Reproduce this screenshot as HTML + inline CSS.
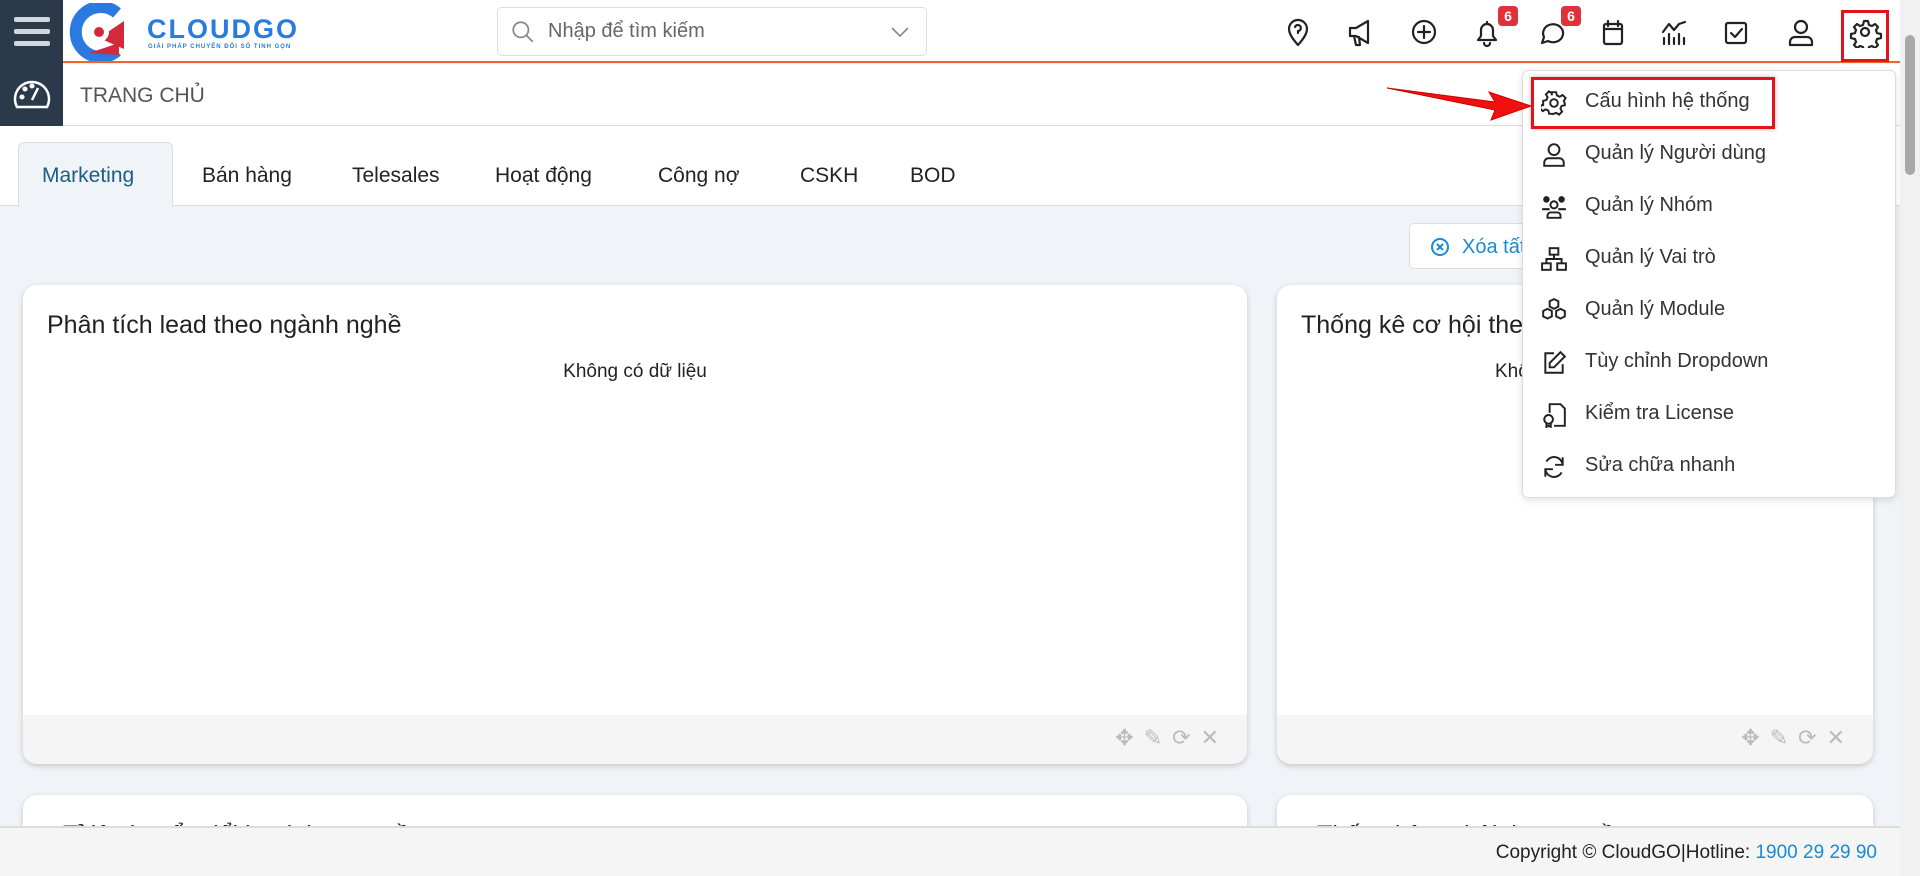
<!DOCTYPE html>
<html><head><meta charset="utf-8"><style>
*{box-sizing:border-box;margin:0;padding:0}
html{width:1920px;height:876px;overflow:hidden}
body{width:1920px;height:876px;overflow:hidden;font-family:"Liberation Sans",sans-serif;background:#f0f3f7;position:relative;color:#222}
.abs{position:absolute}
.side{left:0;top:0;width:63px;height:126px;background:#2b3a4a}
.top{left:63px;top:0;width:1837px;height:63px;background:#fff;border-bottom:2px solid #f0642a}
.row2{left:63px;top:64px;width:1837px;height:62px;background:#fff;border-bottom:1px solid #ddd}
.tabs{left:0;top:126px;width:1900px;height:80px;background:#fff;border-bottom:1px solid #ddd}
.tab{position:absolute;top:38px;font-size:21px;color:#222}
.card{background:#fff;border-radius:14px;box-shadow:0 2px 6px rgba(0,0,0,.18);overflow:hidden}
.cf{position:absolute;left:0;right:0;bottom:0;height:49px;background:#f5f5f5}
.badge{position:absolute;top:6px;background:#e0303c;color:#fff;font-size:14px;font-weight:bold;width:20px;height:20px;border-radius:4px;text-align:center;line-height:20px}
.dd{left:1522px;top:70px;width:374px;height:428px;background:#fff;border:1px solid #ddd;border-radius:6px;box-shadow:0 2px 8px rgba(0,0,0,.12)}
.it{position:absolute;left:62px;font-size:20px;color:#333;white-space:nowrap}
.ii{position:absolute;left:18px;width:26px;height:26px}
</style></head><body>
<div class="abs side">
 <div class="abs" style="left:14px;top:17px;width:36px;height:5px;background:#cfd6dd;border-radius:2px"></div>
 <div class="abs" style="left:14px;top:29px;width:36px;height:5px;background:#cfd6dd;border-radius:2px"></div>
 <div class="abs" style="left:14px;top:41px;width:36px;height:5px;background:#cfd6dd;border-radius:2px"></div>
 <svg class="abs" style="left:12px;top:78px" width="40" height="32" viewBox="0 0 40 32" fill="none" stroke="#fff" stroke-width="2.5"><path d="M5 29 A17 17 0 1 1 35 29 Z"/><path d="M20 22 L26 10"/><circle cx="10" cy="19" r="1.3" fill="#fff"/><circle cx="13" cy="11" r="1.3" fill="#fff"/><circle cx="20" cy="8" r="1.3" fill="#fff"/></svg>
</div>
<div class="abs top">
 <svg class="abs" style="left:6px;top:3px" width="62" height="58" viewBox="0 0 62 58"><path d="M48 10 A25 25 0 1 0 48 48" fill="none" stroke="#2a7ae2" stroke-width="12"/><path d="M30 35 L55 18 L55 46 Z" fill="#d32a3a"/><circle cx="30" cy="29" r="10" fill="#fff"/><circle cx="30" cy="29" r="5" fill="#d32a3a"/><path d="M20 50 L50 40 L50 52 Z" fill="#d32a3a"/></svg>
 <div class="abs" style="left:84px;top:14px;font-size:27px;font-weight:bold;color:#2a7ae2;letter-spacing:2px">CLOUDGO</div>
 <div class="abs" style="left:85px;top:44px;font-size:6px;font-weight:bold;color:#2a7ae2;letter-spacing:1px">GIẢI PHÁP CHUYỂN ĐỔI SỐ TINH GỌN</div>
 <div class="abs" style="left:434px;top:7px;width:430px;height:49px;border:1px solid #ddd;border-radius:5px">
  <svg class="abs" style="left:12px;top:11px" width="26" height="26" viewBox="0 0 24 24" fill="none" stroke="#888" stroke-width="1.6"><circle cx="10" cy="10" r="7"/><path d="M15 15l6 6"/></svg>
  <div class="abs" style="left:50px;top:12px;font-size:20px;color:#666">Nhập để tìm kiếm</div>
  <svg class="abs" style="left:392px;top:17px" width="20" height="14" viewBox="0 0 20 14" fill="none" stroke="#888" stroke-width="1.6"><path d="M2 3l8 8 8-8"/></svg>
 </div>
</div>
<svg class="abs" style="left:1284px;top:18px" width="600" height="30" viewBox="0 0 600 30" fill="none" stroke="#222" stroke-width="2.2" stroke-linecap="round" stroke-linejoin="round">
 <path d="M14 27 C6 18 5 14 5 11 A9 9 0 0 1 23 11 C23 14 22 18 14 27Z"/><path d="M11 9 A3 3 0 1 1 14 13 V15"/>
 <path d="M66 10 H72 L84 3 V25 L72 18 H66 Z M70 18 L72 27 H76 L75 19"/>
 <circle cx="140" cy="14" r="11"/><path d="M140 8v12M134 14h12"/>
 <path d="M194 22 H212 L209 18 V12 A6 6 0 0 0 197 12 V18 Z M200 25 A3 3 0 0 0 206 25 M203 4v2"/>
 <path d="M258 25 L260 19 A10 9 0 1 1 264 23 Z"/>
 <rect x="320" y="6" width="18" height="20" rx="2"/><path d="M320 11h18M324 3v5M334 3v5"/>
 <path d="M380 26v-6M385 26v-10M390 26v-6M395 26v-10M400 26v-6M379 14 L385 6 L390 12 L395 6 L401 4"/>
 <rect x="442" y="5" width="20" height="20" rx="2"/><path d="M447 15l4 4 7-8"/>
 <circle cx="517" cy="9" r="6"/><path d="M506 27 V24 A5 5 0 0 1 511 19 H523 A5 5 0 0 1 528 24 V27Z"/>
 <circle cx="581" cy="14" r="4"/><path d="M581 3 l3 0 1 4 3 1 3-2 3 3-2 3 1 3 4 1v4l-4 1-1 3 2 3-3 3-3-2-3 1-1 4h-4l-1-4-3-1-3 2-3-3 2-3-1-3-4-1v-4l4-1 1-3-2-3 3-3 3 2 3-1 1-4z"/>
</svg>
<div class="badge" style="left:1498px">6</div><div class="badge" style="left:1561px">6</div>
<div class="abs" style="left:1841px;top:10px;width:48px;height:52px;border:3px solid #e5121a"></div>
<div class="abs row2"><div class="abs" style="left:17px;top:20px;font-size:21px;color:#555">TRANG CHỦ</div></div>
<div class="abs tabs">
 <div class="abs" style="left:18px;top:16px;width:155px;height:65px;background:#f0f3f7;border:1px solid #ddd;border-bottom:none;border-radius:6px 6px 0 0"></div>
 <div class="tab" style="left:42px;color:#1a5e85">Marketing</div>
 <div class="tab" style="left:202px">Bán hàng</div>
 <div class="tab" style="left:352px">Telesales</div>
 <div class="tab" style="left:495px">Hoạt động</div>
 <div class="tab" style="left:658px">Công nợ</div>
 <div class="tab" style="left:800px">CSKH</div>
 <div class="tab" style="left:910px">BOD</div>
</div>
<div class="abs" style="left:1409px;top:223px;width:180px;height:46px;background:#fff;border:1px solid #ddd;border-radius:5px;overflow:hidden">
 <svg class="abs" style="left:20px;top:13px" width="20" height="20" viewBox="0 0 20 20" fill="none" stroke="#1a8ad4" stroke-width="2"><circle cx="10" cy="10" r="8"/><path d="M7 7l6 6M13 7l-6 6"/></svg>
 <div class="abs" style="left:52px;top:12px;font-size:20px;color:#1a8ad4;white-space:nowrap">Xóa tất cả</div>
</div>
<div class="abs card" style="left:23px;top:285px;width:1224px;height:479px">
 <div class="abs" style="left:24px;top:26px;font-size:25px">Phân tích lead theo ngành nghề</div>
 <div class="abs" style="left:0;right:0;top:76px;text-align:center;font-size:19px">Không có dữ liệu</div>
 <div class="cf"><div class="abs" style="right:18px;top:10px;font-size:22px;color:#bbb;letter-spacing:10px">✥✎⟳✕</div></div>
</div>
<div class="abs card" style="left:1277px;top:285px;width:596px;height:479px">
 <div class="abs" style="left:24px;top:26px;font-size:25px;white-space:nowrap">Thống kê cơ hội theo</div>
 <div class="abs" style="left:218px;top:76px;font-size:19px">Không có dữ liệu</div>
 <div class="cf"><div class="abs" style="right:18px;top:10px;font-size:22px;color:#bbb;letter-spacing:10px">✥✎⟳✕</div></div>
</div>
<div class="abs card" style="left:23px;top:795px;width:1224px;height:60px;border-radius:14px 14px 0 0"><div class="abs" style="left:40px;top:26px;font-size:25px">Tỉ lệ chuyển đổi lead theo nguồn</div></div>
<div class="abs card" style="left:1277px;top:795px;width:596px;height:60px;border-radius:14px 14px 0 0"><div class="abs" style="left:40px;top:26px;font-size:25px">Thống kê cơ hội theo nguồn</div></div>
<div class="abs" style="left:0;top:826px;width:1900px;height:50px;background:#f5f5f5;border-top:2px solid #ddd">
 <div class="abs" style="right:23px;top:14px;font-size:19px;color:#222">Copyright © CloudGO|Hotline: <span style="color:#1a8ad4">1900 29 29 90</span></div>
</div>
<div class="abs" style="left:1900px;top:0;width:20px;height:876px;background:#f1f1f1"><div class="abs" style="left:5px;top:35px;width:10px;height:140px;background:#a8a8a8;border-radius:5px"></div></div>
<div class="abs dd">
 <svg class="ii" style="top:19px" viewBox="0 0 24 24" fill="none" stroke="#222" stroke-width="1.8"><circle cx="12" cy="12" r="3.5"/><path d="M10 2h4l.7 3 2.5 1.2 2.7-1.6 2.8 2.8-1.6 2.7L22 12.5v0l0 1.5-3 .7-1.1 2.5 1.6 2.7-2.8 2.8-2.7-1.6-2.5 1V22h-4l-.7-3-2.5-1.1-2.7 1.6-2.8-2.8 1.6-2.7L2 14v-4l3-.7 1.1-2.5-1.6-2.7 2.8-2.8 2.7 1.6L10 5z"/></svg>
 <div class="it" style="top:19px">Cấu hình hệ thống</div>
 <svg class="ii" style="top:71px" viewBox="0 0 24 24" fill="none" stroke="#222" stroke-width="1.8"><circle cx="12" cy="7" r="5"/><path d="M3 22v-3a4 4 0 0 1 4-4h10a4 4 0 0 1 4 4v3z"/></svg>
 <div class="it" style="top:71px">Quản lý Người dùng</div>
 <svg class="ii" style="top:123px" viewBox="0 0 24 24" fill="#222"><circle cx="5" cy="5" r="3"/><circle cx="19" cy="5" r="3"/><circle cx="12" cy="10" r="3.3" fill="none" stroke="#222" stroke-width="1.8"/><path d="M1 13h7v2H1zM16 13h7v2h-7z"/><path d="M6 22v-2a3 3 0 0 1 3-3h6a3 3 0 0 1 3 3v2z" fill="none" stroke="#222" stroke-width="1.8"/></svg>
 <div class="it" style="top:123px">Quản lý Nhóm</div>
 <svg class="ii" style="top:175px" viewBox="0 0 24 24" fill="none" stroke="#222" stroke-width="1.8"><rect x="8" y="2" width="8" height="6"/><rect x="1" y="16" width="8" height="6"/><rect x="15" y="16" width="8" height="6"/><path d="M12 8v4M5 16v-4h14v4"/></svg>
 <div class="it" style="top:175px">Quản lý Vai trò</div>
 <svg class="ii" style="top:227px" viewBox="0 0 24 24" fill="none" stroke="#222" stroke-width="1.8"><path d="M8 3l4-2 4 2v5l-4 2-4-2z M2 12l4-2 4 2v5l-4 2-4-2z M14 12l4-2 4 2v5l-4 2-4-2z"/></svg>
 <div class="it" style="top:227px">Quản lý Module</div>
 <svg class="ii" style="top:279px" viewBox="0 0 24 24" fill="none" stroke="#222" stroke-width="1.8"><path d="M12 3H4v18h16v-8"/><path d="M18 2l4 4-10 10H8v-4z"/></svg>
 <div class="it" style="top:279px">Tùy chỉnh Dropdown</div>
 <svg class="ii" style="top:331px" viewBox="0 0 24 24" fill="none" stroke="#222" stroke-width="1.8"><path d="M8 10V2h10l4 4v16H12"/><circle cx="7" cy="16" r="4"/><path d="M5 19v4l2-1 2 1v-4"/></svg>
 <div class="it" style="top:331px">Kiểm tra License</div>
 <svg class="ii" style="top:383px" viewBox="0 0 24 24" fill="none" stroke="#222" stroke-width="1.8"><path d="M20 10A8 8 0 0 0 5 7M4 14a8 8 0 0 0 15 3"/><path d="M20 3v7h-7M4 21v-7h7"/></svg>
 <div class="it" style="top:383px">Sửa chữa nhanh</div>
</div>
<div class="abs" style="left:1531px;top:77px;width:244px;height:52px;border:3px solid #e5121a;box-shadow:0 0 4px rgba(0,0,0,.3)"></div>
<svg class="abs" style="left:1385px;top:82px" width="150" height="40" viewBox="0 0 150 40"><path d="M2 6 L110 20 L104 10 L146 24 L106 38 L110 28 Z" fill="#f01010" stroke="#c00" stroke-width="1"/></svg>
</body></html>
